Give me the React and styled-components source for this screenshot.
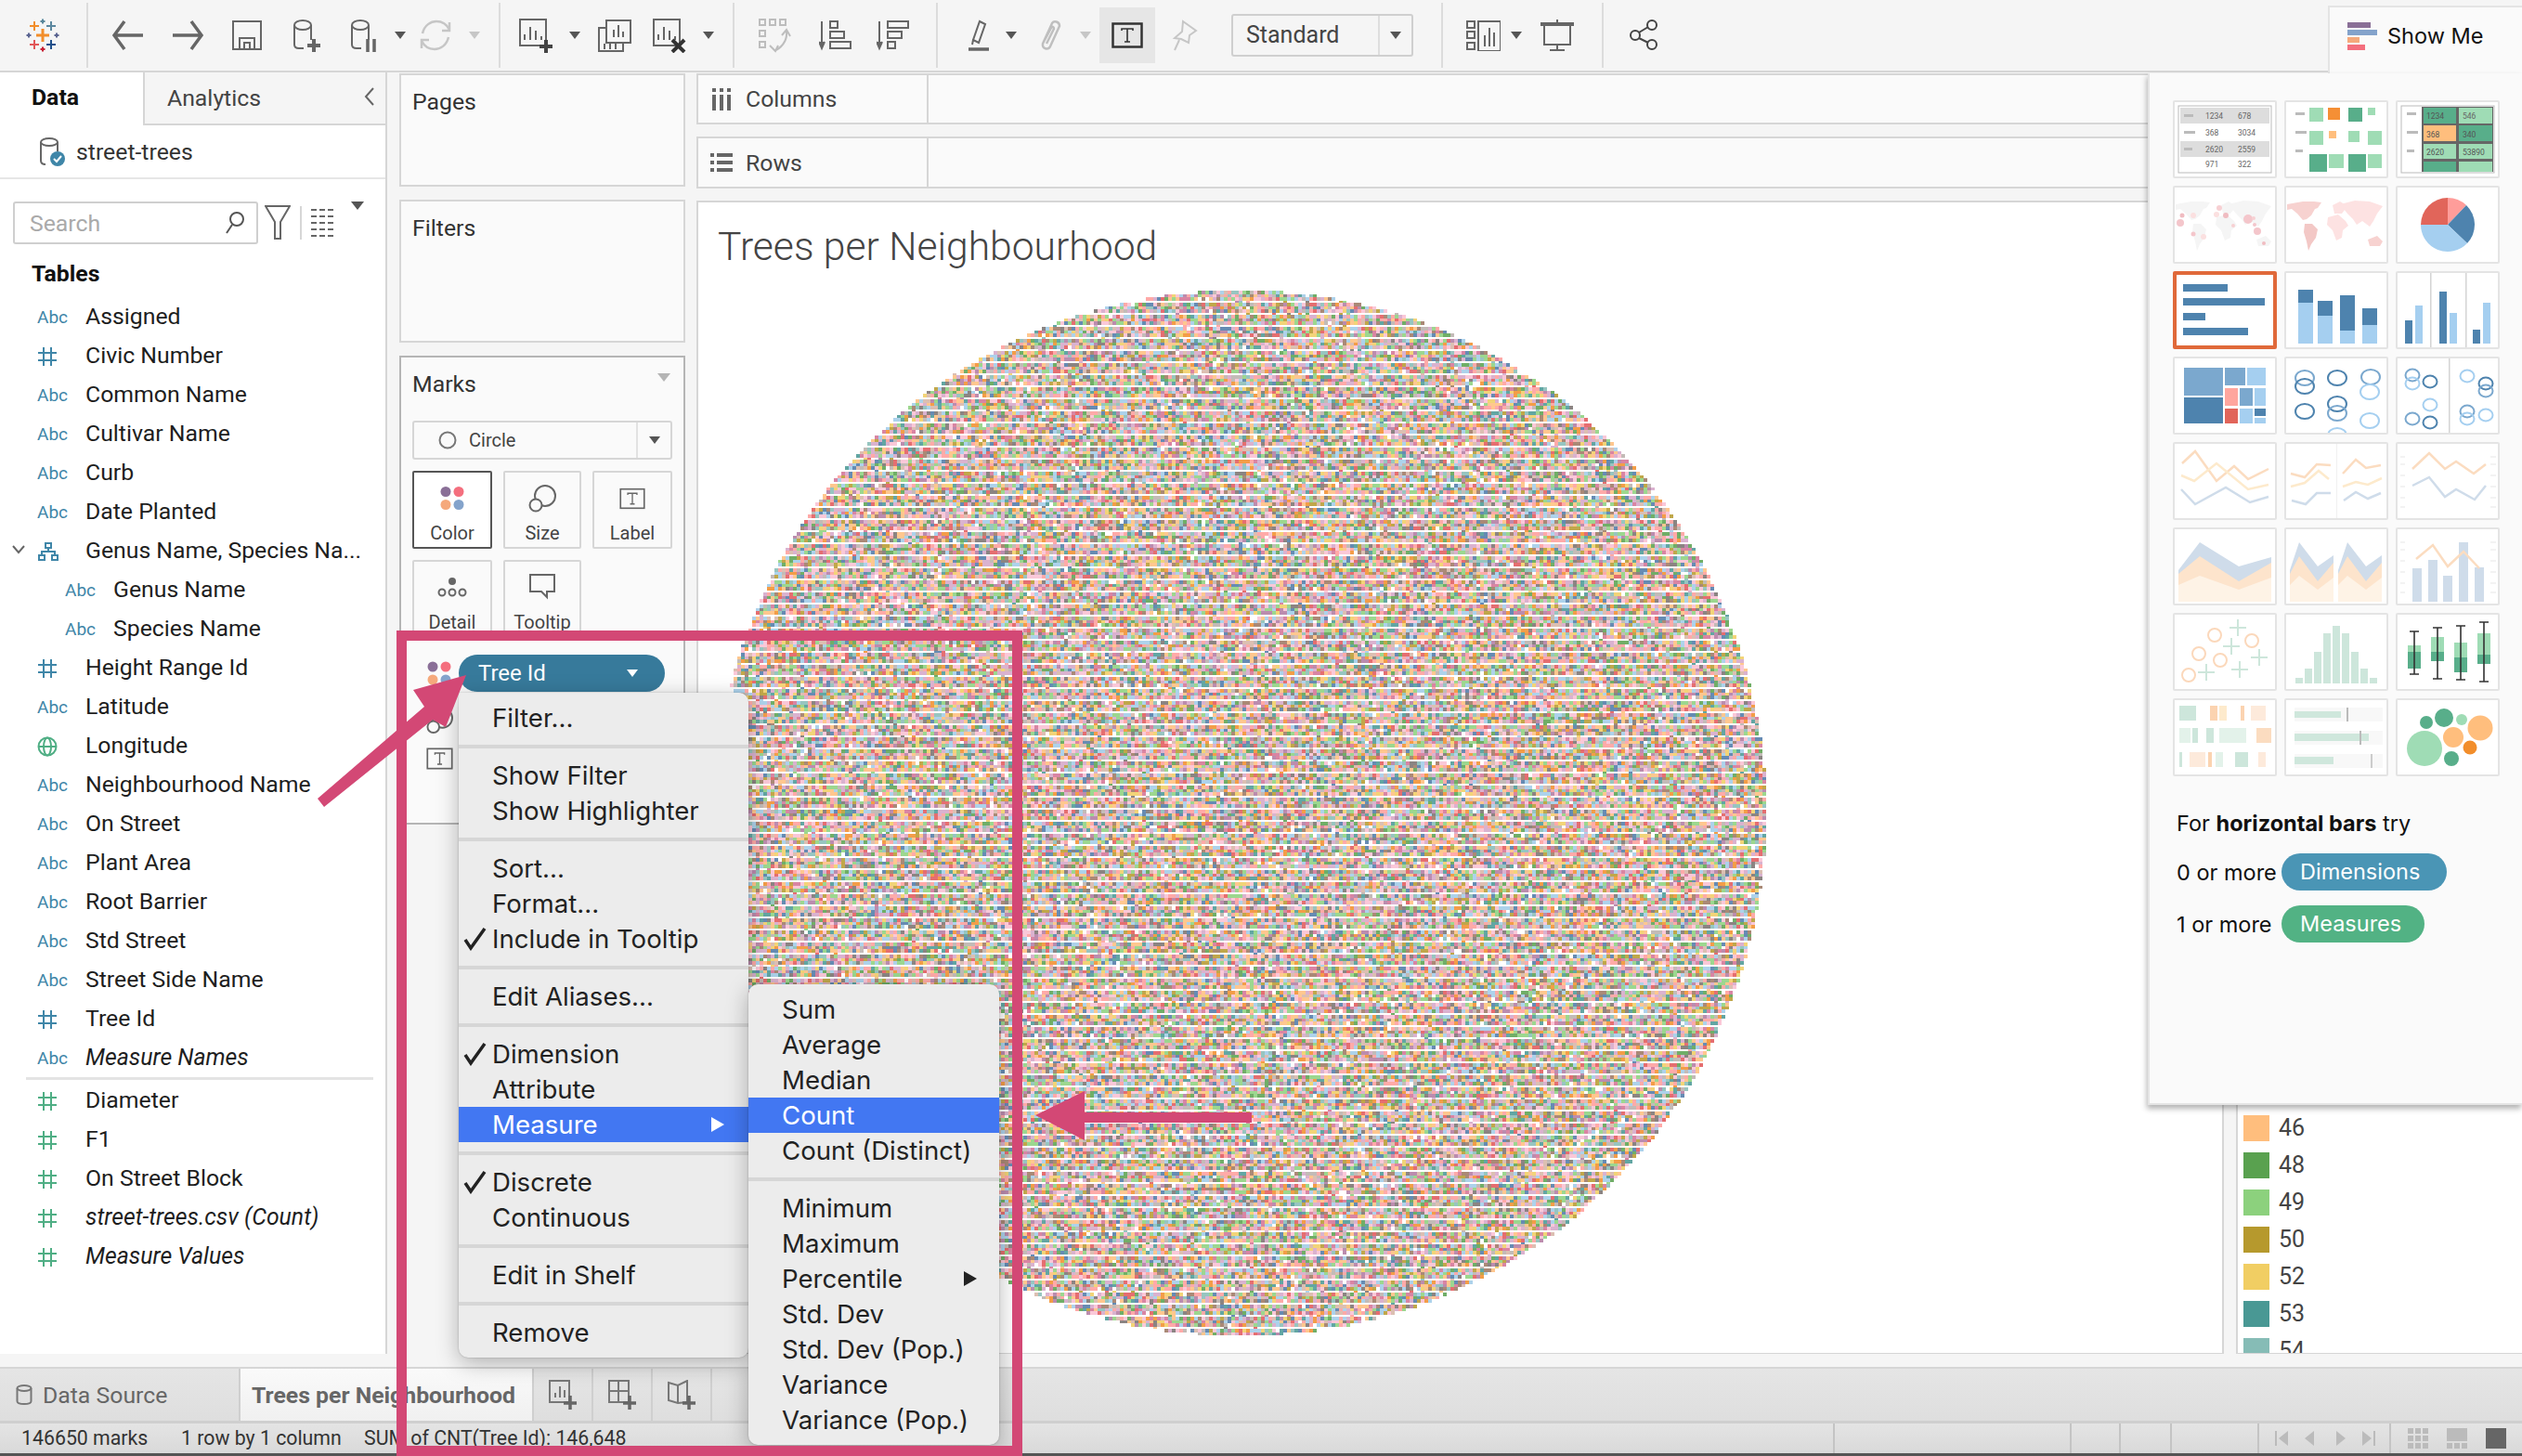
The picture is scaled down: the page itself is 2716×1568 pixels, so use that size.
import React, { useMemo } from 'react';
import styled, { createGlobalStyle } from 'styled-components';

const GlobalStyle = createGlobalStyle`
  html, body { margin: 0; padding: 0; background: #f5f5f5; }
  * { box-sizing: border-box; }
`;

const Page = styled.div`
  position: relative;
  width: 2716px;
  height: 1568px;
  overflow: hidden;
  display: flex;
  flex-direction: column;
  background: #f5f5f5;
  color: #222;
  font-family: Roboto, sans-serif;
  font-size: 24.8px;
`;

/* ---------- toolbar ---------- */
const Toolbar = styled.div`
  height: 78px;
  flex: none;
  display: flex;
  align-items: center;
  background: #f5f5f5;
  border-bottom: 2px solid #d6d6d6;
`;
const ToolGroup = styled.div`
  width: ${(p) => p.$w}px;
  height: 76px;
  flex: none;
  padding-left: ${(p) => p.$pl || 0}px;
  display: flex;
  align-items: center;
`;
const ToolDivider = styled.div`
  width: 2px;
  height: 70px;
  flex: none;
  background: #dcdcdc;
`;
const Slot = styled.div`
  width: ${(p) => p.$w}px;
  height: 60px;
  flex: none;
  display: flex;
  align-items: center;
  justify-content: center;
  background: ${(p) => (p.$on ? '#e6e6e6' : 'transparent')};
`;
const Caret = styled.span`
  width: 0;
  height: 0;
  border-left: ${(p) => p.$s || 6}px solid transparent;
  border-right: ${(p) => p.$s || 6}px solid transparent;
  border-top: ${(p) => (p.$s || 6) + 2}px solid ${(p) => p.$c || '#555'};
`;
const StandardSelect = styled.div`
  width: 196px;
  height: 46px;
  flex: none;
  display: flex;
  align-items: center;
  border: 2px solid #cfcfcf;
  border-radius: 3px;
  color: #444;
  font-size: 25px;
  > span:first-child { width: 158px; padding-left: 14px; border-right: 2px solid #dedede; line-height: 42px; }
  > span:last-child { flex: 1; display: flex; justify-content: center; }
`;

/* ---------- workspace ---------- */
const Workspace = styled.div`
  flex: 1;
  min-height: 0;
  display: flex;
`;
const DataPane = styled.div`
  width: 417px;
  flex: none;
  background: #fff;
  border-right: 2px solid #d6d6d6;
  display: flex;
  flex-direction: column;
`;
const PaneTabs = styled.div`
  height: 57px;
  flex: none;
  display: flex;
`;
const PaneTab = styled.div`
  width: ${(p) => (p.$active ? 154 : 261)}px;
  padding-left: ${(p) => (p.$active ? 34 : 24)}px;
  padding-top: ${(p) => (p.$active ? 12 : 13)}px;
  display: flex;
  justify-content: space-between;
  font-weight: ${(p) => (p.$active ? 700 : 400)};
  color: ${(p) => (p.$active ? '#111' : '#444')};
  background: ${(p) => (p.$active ? '#fff' : '#f5f5f5')};
  border-left: ${(p) => (p.$active ? 'none' : '2px solid #d6d6d6')};
  border-bottom: ${(p) => (p.$active ? 'none' : '2px solid #d6d6d6')};
  > svg { margin: 2px 10px 0 0; }
`;
const SourceRow = styled.div`
  height: 58px;
  flex: none;
  display: flex;
  align-items: center;
  gap: 12px;
  padding-left: 42px;
  border-bottom: 2px solid #e6e6e6;
  color: #333;
`;
const SearchRow = styled.div`
  height: 92px;
  flex: none;
  display: flex;
  align-items: center;
  padding: 0 0 0 14px;
  margin-top: 1px;
`;
const SearchBox = styled.div`
  width: 264px;
  height: 46px;
  flex: none;
  display: flex;
  align-items: center;
  justify-content: space-between;
  padding: 0 12px 0 16px;
  border: 2px solid #cfcfcf;
  border-radius: 3px;
  color: #aaa;
`;
const FilterSep = styled.div`
  width: 2px;
  height: 36px;
  margin: 0 10px;
  background: #d6d6d6;
`;
const TablesHeading = styled.div`
  height: 26px;
  line-height: 26px;
  padding-left: 34px;
  margin: -4px 0 11px;
  font-weight: 700;
  color: #111;
`;
const FieldRow = styled.div`
  height: 42px;
  flex: none;
  display: flex;
  align-items: center;
  padding-left: ${(p) => (p.$child ? 70 : 40)}px;
  color: #1e1e1e;
  font-style: ${(p) => (p.$italic ? 'italic' : 'normal')};
  white-space: nowrap;
  position: relative;
`;
const TypeBadge = styled.span`
  width: 52px;
  flex: none;
  display: flex;
  align-items: center;
  font-style: normal;
  font-size: 19px;
  padding-top: 3px;
  color: #3f86a8;
`;
const ExpandCaret = styled.svg`
  position: absolute;
  left: 13px;
  top: 15px;
`;
const FieldRule = styled.div`
  height: 3px;
  margin: 1px 13px 0 28px;
  background: #e4e4e4;
`;

const ShelvesColumn = styled.div`
  width: 308px;
  flex: none;
  margin: 1px 12px 0 13px;
  display: flex;
  flex-direction: column;
  gap: 14px;
`;
const Card = styled.div`
  height: ${(p) => p.$h}px;
  flex: none;
  background: #fafafa;
  border: 2px solid ${(p) => p.$line || '#d6d6d6'};
  padding: 14px 12px;
  color: #333;
`;
const MarksHead = styled.div`
  height: 54px;
  display: flex;
  justify-content: space-between;
  > span:last-child { margin: 12px 2px 0 0; }
`;
const MarkSelect = styled.div`
  height: 42px;
  display: flex;
  align-items: center;
  border: 2px solid #d6d6d6;
  border-radius: 3px;
  color: #444;
  font-size: 20px;
  > svg { margin: 0 13px 0 26px; }
  > div { margin-left: auto; width: 37px; height: 38px; border-left: 2px solid #e2e2e2; display: flex; align-items: center; justify-content: center; }
`;
const MarkGrid = styled.div`
  display: grid;
  grid-template-columns: 86px 84px 86px;
  grid-auto-rows: 84px;
  gap: 12px;
  margin-top: 12px;
`;
const MarkCard = styled.div`
  display: flex;
  flex-direction: column;
  align-items: center;
  padding-top: 12px;
  border: 2px solid ${(p) => (p.$active ? '#555' : '#d6d6d6')};
  background: ${(p) => (p.$active ? '#fff' : 'transparent')};
  border-radius: 2px;
  color: #444;
  font-size: 20px;
  > svg { height: 32px; margin-bottom: 9px; }
`;
const PillRow = styled.div`
  height: 40px;
  display: flex;
  align-items: center;
  padding-left: 15px;
  margin-top: ${(p) => p.$mt || 0}px;
  > svg { width: 29px; flex: none; }
`;
const FieldPill = styled.div`
  width: 222px;
  height: 40px;
  margin-left: 6px;
  padding: 0 29px 0 21px;
  display: flex;
  align-items: center;
  justify-content: space-between;
  border-radius: 20px;
  background: #377a9b;
  color: #fff;
  font-size: 24px;
`;

const MainColumn = styled.div`
  flex: 1;
  min-width: 0;
  margin-top: 1px;
  display: flex;
  flex-direction: column;
`;
const AxisShelf = styled.div`
  height: ${(p) => p.$h}px;
  flex: none;
  margin-bottom: 13px;
  display: flex;
  background: #fafafa;
  border: 2px solid #d6d6d6;
  border-right: none;
  > div {
    width: 248px;
    display: flex;
    align-items: center;
    gap: 14px;
    padding-left: 13px;
    border-right: 2px solid #d6d6d6;
    color: #444;
  }
`;
const ViewRow = styled.div`
  height: 1243px;
  flex: none;
  display: flex;
  gap: 13px;
`;
const ViewPane = styled.div`
  width: 1645px;
  flex: none;
  overflow: hidden;
  background: #fff;
  border: 2px solid #d6d6d6;
  padding: 23px 0 0 24px;
`;
const ViewTitle = styled.div`
  height: 72px;
  margin-left: -3px;
  font-size: 42.6px;
  font-weight: 300;
  line-height: 48px;
  color: #444;
`;
const ScatterSvg = styled.svg`
  display: block;
  margin-left: -6px;
`;
const LegendPane = styled.div`
  flex: 1;
  background: #fff;
  border: 2px solid #d6d6d6;
  border-right: none;
  overflow: hidden;
  padding: 983px 0 0 6px;
  display: flex;
  flex-direction: column;
  gap: 12px;
`;
const LegendItem = styled.div`
  height: 28px;
  flex: none;
  display: flex;
  align-items: center;
  gap: 10px;
  color: #444;
  font-size: 25px;
  line-height: 28px;
  > i { width: 28px; height: 28px; background: ${(p) => p.$c}; }
`;

/* ---------- bottom bars ---------- */
const SheetStrip = styled.div`
  height: 14px;
  flex: none;
  background: #f5f5f5;
`;
const TabBar = styled.div`
  height: 61px;
  flex: none;
  display: flex;
  border-top: 2px solid #d6d6d6;
  border-bottom: 3px solid #cfcfcf;
  background: linear-gradient(#e5e5e5, #dedede);
  color: #666;
`;
const SheetTab = styled.div`
  width: ${(p) => p.$w}px;
  flex: none;
  display: flex;
  align-items: center;
  gap: 11px;
  padding-left: ${(p) => p.$pl || 0}px;
  justify-content: ${(p) => (p.$center ? 'center' : 'flex-start')};
  border-right: 2px solid #cfcfcf;
  font-weight: ${(p) => (p.$active ? 700 : 400)};
  background: ${(p) => (p.$active ? 'linear-gradient(#fafafa, #f0f0f0)' : 'transparent')};
`;
const StatusBar = styled.div`
  height: 32px;
  flex: none;
  display: flex;
  background: linear-gradient(#e4e4e4, #d9d9d9);
  font-size: 21.3px;
  color: #333;
  white-space: nowrap;
`;
const StatusCell = styled.div`
  width: ${(p) => p.$w}px;
  flex: none;
  padding-left: ${(p) => p.$pl || 0}px;
  display: flex;
  align-items: center;
  gap: ${(p) => p.$gap || 0}px;
  border-right: ${(p) => (p.$line ? '2px solid #c4c4c4' : 'none')};
  line-height: 32px;
`;
const BottomEdge = styled.div`
  height: 3px;
  flex: none;
  background: #555;
`;

/* ---------- context menus ---------- */
const MenuLayer = styled.div`
  position: absolute;
  left: 494px;
  top: 746px;
  width: 312px;
  font-family: Inter, sans-serif;
  font-size: 27.6px;
  color: #222;
`;
const Menu = styled.div`
  width: ${(p) => p.$w}px;
  padding: 8px 0;
  background: #ececec;
  border-radius: ${(p) => (p.$sub ? '10px' : '0 10px 10px 10px')};
  box-shadow: 0 6px 24px rgba(0, 0, 0, 0.28), 0 0 2px rgba(0, 0, 0, 0.25);
  ${(p) => p.$sub && 'position: absolute; left: 312px; top: 314px;'}
`;
const MenuItem = styled.div`
  height: 38px;
  display: flex;
  align-items: center;
  justify-content: space-between;
  position: relative;
  padding: 0 ${(p) => (p.$sub ? 24 : 26)}px 0 36px;
  background: ${(p) => (p.$hl ? '#4277f2' : 'transparent')};
  color: ${(p) => (p.$hl ? '#fff' : '#222')};
  white-space: nowrap;
`;
const MenuCheck = styled.svg`
  position: absolute;
  left: 4px;
  top: 6px;
`;
const MenuArrow = styled.span`
  border-top: 8px solid transparent;
  border-bottom: 8px solid transparent;
  border-left: 14px solid ${(p) => (p.$hl ? '#fff' : '#222')};
`;
const MenuSep = styled.div`
  height: 24px;
  display: flex;
  align-items: center;
  &::before { content: ''; flex: 1; height: 4px; background: #d6d6d6; }
`;

/* ---------- show me ---------- */
const ShowMeTab = styled.div`
  position: absolute;
  left: 2507px;
  top: 6px;
  width: 209px;
  height: 76px;
  display: flex;
  align-items: center;
  gap: 11px;
  padding: 0 0 13px 19px;
  background: #fafafa;
  border-left: 2px solid #e4e4e4;
  border-top: 2px solid #e4e4e4;
  font-family: Inter, sans-serif;
  font-size: 23.5px;
  color: #111;
`;
const ShowMePanel = styled.div`
  position: absolute;
  left: 2313px;
  top: 79px;
  width: 403px;
  height: 1111px;
  padding: 29px 0 0 25px;
  background: #fafafa;
  border-left: 2px solid #e4e4e4;
  border-bottom: 2px solid #e4e4e4;
  box-shadow: -1px 4px 6px rgba(0, 0, 0, 0.3);
  font-family: Inter, sans-serif;
  font-size: 23.5px;
  color: #111;
`;
const ThumbGrid = styled.div`
  display: grid;
  grid-template-columns: repeat(3, 112px);
  grid-auto-rows: 84px;
  gap: 8px;
`;
const Thumb = styled.div`
  background: #fff;
  border: ${(p) => (p.$sel ? '4px solid #e0693a' : '2px solid #e4e4e4')};
  border-radius: 2px;
  overflow: hidden;
  > svg { display: block; width: 112px; height: 84px; margin: ${(p) => (p.$sel ? '-4px' : '-2px')}; }
`;
const HintBlock = styled.div`
  margin: 36px 0 0 4px;
  display: flex;
  flex-direction: column;
  gap: 16px;
  > div:first-child { height: 30px; line-height: 30px; margin-bottom: 1px; }
`;
const HintRow = styled.div`
  height: 40px;
  display: flex;
  align-items: center;
`;
const HintLabel = styled.span`
  width: 113px;
  flex: none;
`;
const HintPill = styled.span`
  height: 40px;
  width: ${(p) => p.$w}px;
  padding-left: 20px;
  line-height: 39px;
  border-radius: 20px;
  background: ${(p) => p.$c};
  color: #fff;
`;

/* ---------- annotation ---------- */
const AnnotationBox = styled.div`
  position: absolute;
  left: 427px;
  top: 679px;
  width: 674px;
  height: 889px;
  border: 11px solid #d34875;
  pointer-events: none;
`;
const ArrowLayer = styled.svg`
  position: absolute;
  left: 0;
  top: 0;
  pointer-events: none;
`;

/* ---------- icons ---------- */
const G = '#666';
const Stroke = ({ w, h, children, sw = 2, c = G }) => (
  <svg width={w} height={h} viewBox={`0 0 ${w} ${h}`} fill="none" stroke={c} strokeWidth={sw}>{children}</svg>
);

const TableauLogo = () => {
  const cross = (x, y, s, c, k) => (
    <path key={k} d={`M${x - s} ${y}H${x + s}M${x} ${y - s}V${y + s}`} stroke={c} strokeWidth={s > 5 ? 3 : 2} />
  );
  return (
    <svg width="36" height="36" viewBox="0 0 36 36" fill="none">
      {cross(18, 18, 7, '#f28e2b', 'a')}
      {cross(9, 8, 5, '#f28e2b', 'b')}
      {cross(27, 8, 5, '#5b879f', 'c')}
      {cross(9, 28, 5, '#e15759', 'd')}
      {cross(27, 28, 5, '#1f4f8a', 'e')}
      {cross(18, 3, 2.5, '#59879b', 'f')}
      {cross(18, 33, 2.5, '#c72035', 'g')}
      {cross(3, 18, 2.5, '#5b6591', 'h')}
      {cross(33, 18, 2.5, '#5b6591', 'i')}
    </svg>
  );
};
const ArrowIcon = ({ dir }) => (
  <Stroke w={36} h={34} sw={3.5}>
    {dir === 'left' ? <path d="M34 17H3M14 2L3 17l11 15" /> : <path d="M2 17h31M22 2l11 15-11 15" />}
  </Stroke>
);
const SaveIcon = () => (
  <Stroke w={34} h={34}><path d="M2 2h30v30H2zM9 32V20h16v12M14 32v-7h6v7" /></Stroke>
);
const DbIcon = ({ badge, c = G }) => (
  <svg width="32" height="36" viewBox="0 0 32 36" fill="none" stroke={c} strokeWidth="2">
    <ellipse cx="12" cy="7" rx="9" ry="5" />
    <path d="M3 7v21c0 3 2 4 5 4h5M21 7v16" />
    {badge === 'plus' && <path d="M24 22v14M17 29h14" strokeWidth="4" />}
    {badge === 'pause' && <path d="M20 22v14M27 22v14" strokeWidth="3.5" />}
  </svg>
);
const RefreshIcon = () => (
  <Stroke w={36} h={34} c="#c6c6c6" sw={2.5}>
    <path d="M4 15C6 6 13 2 19 2c6 0 11 3 14 9M32 19c-2 9-9 13-15 13-6 0-11-3-14-9" />
    <path d="M33 3v9h-8M3 31v-9h8" />
  </Stroke>
);
const SheetIcon = ({ badge }) => (
  <svg width="40" height="38" viewBox="0 0 40 38" fill="none" stroke={G} strokeWidth="2">
    <path d="M2 2h28v28H2z" />
    <path d="M9 24v-6M15 24V10M21 24V14M27 24v-4" transform="translate(-2 0)" />
    {badge === 'plus' && <path d="M30 24v14M23 31h14" strokeWidth="4" stroke="#444" />}
    {badge === 'x' && <path d="M22 24l13 13M35 24L22 37" strokeWidth="4" stroke="#333" />}
  </svg>
);
const DupIcon = () => (
  <Stroke w={38} h={36}>
    <path d="M10 2h26v24H10zM18 20v-8M23 20V7M28 20v-6" />
    <path d="M10 10H2v25h26v-9M8 33v-6M14 33v-6M20 33v-6" />
  </Stroke>
);
const SwapIcon = () => (
  <Stroke w={36} h={38} c="#bdbdbd">
    <path d="M2 2h6v6H2zM13 2h6v6h-6zM24 2h6v6h-6zM2 14h6v6H2zM2 26h6v6H2z" />
    <path d="M31 14c1 9-3 16-11 21M26 19l5-6 4 7M13 30l6 6 3-6" />
  </Stroke>
);
const SortIcon = ({ desc }) => (
  <Stroke w={36} h={34}>
    <path d="M3 2v28" />
    <path d="M0 24l3 7 3-7" fill={G} />
    {(desc ? [[12, 22], [12, 15], [12, 8]] : [[12, 8], [12, 15], [12, 22]]).map(([x, w], i) => (
      <rect key={i} x={x} y={2 + i * 11} width={w} height={7} />
    ))}
  </Stroke>
);
const PenIcon = () => (
  <svg width="24" height="34" viewBox="0 0 24 34" fill="none" stroke={G} strokeWidth="2">
    <path d="M13 2l6 3-7 20-6-3zM6 22l-1 5" />
    <path d="M1 32h22" strokeWidth="3.5" />
  </svg>
);
const ClipIcon = () => (
  <Stroke w={26} h={34} c="#bfbfbf" sw={2.5}>
    <path d="M4 26L14 4c2-3 8-2 8 3L12 29c-2 4-9 3-8-3l9-17c1-2 3-1 3 1L8 26" />
  </Stroke>
);
const TextIcon = ({ w = 34, h = 28, sw = 2.5, c = '#333' }) => (
  <svg width={w} height={h} viewBox="0 0 34 28" fill="none" stroke={c} strokeWidth={sw}>
    <rect x="1.5" y="1.5" width="31" height="25" />
    <path d="M11 9V7h12v2M17 7v14M14 21h6" strokeWidth="1.6" />
  </svg>
);
const PinIcon = () => (
  <Stroke w={28} h={34} c="#c6c6c6">
    <path d="M12 2l14 10-7 5-1 8-8-4-7-1 8-7zM8 22L3 33" />
  </Stroke>
);
const FitIcon = () => (
  <Stroke w={38} h={34}>
    <path d="M2 2h8v7H2zM2 13h8v7H2zM2 25h8v7H2zM14 2h24v32H14zM21 29V17M26 29V9M31 29V14" />
  </Stroke>
);
const PresentIcon = () => (
  <svg width="36" height="34" viewBox="0 0 36 34" fill="none" stroke={G} strokeWidth="2">
    <path d="M0 5h36" strokeWidth="4" />
    <path d="M18 0v3M4 7v20h28V7M18 27v6M10 33h16" />
  </svg>
);
const ShareIcon = () => (
  <Stroke w={30} h={34} c="#444">
    <circle cx="6" cy="17" r="5" /><circle cx="24" cy="6" r="5" /><circle cx="24" cy="27" r="5" />
    <path d="M10 14l10-6M10 20l10 5" />
  </Stroke>
);
const CylinderBadge = () => (
  <svg width="28" height="32" viewBox="0 0 28 32">
    <g fill="none" stroke="#666" strokeWidth="2">
      <ellipse cx="11" cy="6" rx="9" ry="4" />
      <path d="M2 6v20c0 3 2 4 5 4M20 6v10" />
    </g>
    <circle cx="20" cy="24" r="8" fill="#3f86a8" />
    <path d="M16 24l3 3 5-6" fill="none" stroke="#fff" strokeWidth="2" />
  </svg>
);
const HashIcon = ({ c }) => (
  <svg width="22" height="22" viewBox="0 0 22 22" fill="none" stroke={c} strokeWidth="2">
    <path d="M7 1v20M15 1v20M1 7h20M1 15h20" />
  </svg>
);
const GlobeIcon = () => (
  <svg width="22" height="22" viewBox="0 0 22 22" fill="none" stroke="#4fae84" strokeWidth="2">
    <circle cx="11" cy="11" r="9.5" /><ellipse cx="11" cy="11" rx="4" ry="9.5" /><path d="M1.5 11h19" />
  </svg>
);
const TreeIcon = () => (
  <svg width="24" height="22" viewBox="0 0 24 22" fill="none" stroke="#3f86a8" strokeWidth="2">
    <path d="M9 2h6v5H9zM2 15h6v5H2zM16 15h6v5h-6zM12 7v4M5 15v-4h14v4" />
  </svg>
);
const DotsIcon = () => (
  <svg width="29" height="29" viewBox="0 0 29 29">
    <circle cx="7" cy="7" r="5.5" fill="#8a6f97" /><circle cx="21" cy="7" r="5.5" fill="#f46f7e" />
    <circle cx="7" cy="21" r="5.5" fill="#f5a97c" /><circle cx="21" cy="21" r="5.5" fill="#84a3cb" />
  </svg>
);
const SizeIcon = () => (
  <svg width="30" height="30" viewBox="0 0 30 30" fill="none" stroke="#666" strokeWidth="2">
    <circle cx="18" cy="12" r="11" /><circle cx="8" cy="22" r="6.5" fill="#fafafa" />
  </svg>
);
const DetailIcon = () => (
  <svg width="32" height="32" viewBox="0 0 32 32" fill="none" stroke="#666" strokeWidth="2">
    <circle cx="16" cy="9" r="4" fill="#666" stroke="none" />
    <circle cx="5" cy="21" r="3.5" /><circle cx="16" cy="21" r="3.5" /><circle cx="27" cy="21" r="3.5" />
  </svg>
);
const TooltipIcon = () => (
  <svg width="30" height="32" viewBox="0 0 30 32" fill="none" stroke="#666" strokeWidth="2">
    <path d="M2 2h26v18h-8v6l-6-6H2z" />
  </svg>
);
const CheckMark = () => (
  <MenuCheck width="28" height="26" viewBox="0 0 28 26" fill="none" stroke="#222" strokeWidth="3.5">
    <path d="M3 14l6 9L24 2" />
  </MenuCheck>
);

/* ---------- scatter plot ---------- */
const PALETTE = [
  '#4e79a7', '#a0cbe8', '#f28e2b', '#ffbe7d', '#59a14f', '#8cd17d', '#b6992d', '#f1ce63', '#499894', '#86bcb6',
  '#e15759', '#ff9d9a', '#79706e', '#bab0ac', '#d37295', '#fabfd2', '#b07aa1', '#d4a6c8', '#9d7660', '#d7b5a6',
  '#fabfd2', '#ff9d9a', '#d4a6c8', '#ffbe7d', '#a0cbe8', '#8cd17d',
];
const PLOT_W = 1132;
const PLOT_H = 1126;
const useScatterPaths = () => useMemo(() => {
  let seed = 1337;
  const rand = () => {
    seed = (seed * 1664525 + 1013904223) >>> 0;
    return ((seed >>> 8) % 100000) / 100000;
  };
  const parts = PALETTE.map(() => []);
  const rx = PLOT_W / 2;
  const ry = PLOT_H / 2;
  // three rows of marks, then a nearly empty gap row
  const rows = [[0, 4, 0.98], [4, 3, 0.98], [7, 4, 0.98], [11, 2, 0.1]];
  for (let band = 0; band * 13 < PLOT_H; band += 1) {
    rows.forEach(([off, h, fillRate]) => {
      const y = band * 13 + off;
      for (let x = 0; x < PLOT_W; x += 4) {
        const dx = (x + 2 - rx) / rx;
        const dy = (y + 2 - ry) / ry;
        if (dx * dx + dy * dy < 1 && rand() < fillRate) {
          parts[Math.floor(rand() * PALETTE.length)].push(`M${x} ${y}h4v${h}h-4z`);
        }
      }
    });
  }
  return parts.map((p) => p.join(''));
}, []);

const ScatterPlot = () => {
  const paths = useScatterPaths();
  return (
    <ScatterSvg width={PLOT_W} height={PLOT_H} viewBox={`0 0 ${PLOT_W} ${PLOT_H}`} shapeRendering="crispEdges" opacity="0.86">
      {paths.map((d, i) => <path key={i} d={d} fill={PALETTE[i]} />)}
    </ScatterSvg>
  );
};

/* ---------- show me thumbs ---------- */
const DK = '#4e83ae';
const MD = '#7ba8ce';
const LT = '#a5cff0';
const GD = '#58ae8a';
const GL = '#9fdcb5';
const PG = '#cde6db';
const PO = '#fbdcc0';
const PY = '#fdeacc';
const PB = '#cfdcea';

const Bars = ({ list }) => list.map(([x, y, w, h, c], i) => <rect key={i} x={x} y={y} width={w} height={h} fill={c} />);
const Lines = ({ list, sw = 2.5 }) => list.map(([c, d], i) => <polyline key={i} points={d} fill="none" stroke={c} strokeWidth={sw} />);
const Rings = ({ list, rx, ry }) => list.map(([x, y, c], i) => (
  <ellipse key={i} cx={x} cy={y} rx={rx} ry={ry} fill="none" stroke={c} strokeWidth="2" />
));
const Ticks = () => [16, 24, 36, 48, 60, 70].map((y) => (
  <path key={y} d={`M5 ${y}h5M102 ${y}h6`} stroke="#f0f0f0" strokeWidth="1.5" />
));
const ThumbText = ({ x, y, children, c = '#666' }) => (
  <text x={x} y={y} fontFamily="Roboto, sans-serif" fontSize="8.5" fill={c}>{children}</text>
);
const WORLD = [
  'M3 20L20 17 32 17 40 18 36 24 33 25 29 32 24 36 20 37 14 30 8 25 3 26z',
  'M22 41L30 41 36 47 34 56 29 63 26 70 24 60 21 50z',
  'M52 21L60 17 68 22 62 30 54 30z',
  'M47 34L58 31 66 38 69 43 63 48 62 56 56 59 52 48 46 42z',
  'M60 20L76 16 92 17 106 22 100 30 96 38 92 44 84 38 78 42 74 36 68 30z',
  'M90 58L100 54 106 60 103 65 92 65z',
];
const WorldShape = ({ fills }) => WORLD.map((d, i) => <path key={i} d={d} fill={fills[i % fills.length]} />);

const THUMBS = [
  <>
    <rect x="6" y="6" width="100" height="72" fill="none" stroke="#bbb" strokeWidth="1" />
    <Bars list={[[8, 8, 96, 17, '#ddd'], [8, 44, 96, 17, '#ddd'], [12, 15, 10, 3, '#bbb'], [12, 33, 12, 3, '#bbb'], [12, 51, 9, 3, '#bbb']]} />
    <ThumbText x="35" y="20">1234</ThumbText><ThumbText x="70" y="20">678</ThumbText>
    <ThumbText x="35" y="38">368</ThumbText><ThumbText x="70" y="38">3034</ThumbText>
    <ThumbText x="35" y="56">2620</ThumbText><ThumbText x="70" y="56">2559</ThumbText>
    <ThumbText x="35" y="72">971</ThumbText><ThumbText x="70" y="72">322</ThumbText>
  </>,
  <Bars list={[
    [12, 13, 10, 3, '#bbb'], [12, 33, 12, 3, '#bbb'], [12, 53, 8, 3, '#bbb'],
    [27, 8, 15, 15, GL], [47, 8, 13, 13, '#f58f35'], [69, 8, 15, 15, GD], [90, 8, 8, 8, GL],
    [27, 33, 15, 15, GL], [48, 33, 8, 8, '#ffbe7d'], [69, 33, 12, 12, GL], [90, 33, 15, 15, GL],
    [27, 58, 19, 19, GD], [48, 58, 16, 15, GL], [69, 58, 19, 19, GD], [90, 58, 15, 15, GL],
  ]} />,
  <>
    <rect x="6" y="6" width="100" height="72" fill="none" stroke="#bbb" strokeWidth="1" />
    <Bars list={[
      [12, 13, 10, 3, '#bbb'], [12, 33, 12, 3, '#bbb'], [12, 53, 8, 3, '#bbb'],
      [28, 7, 77, 70, '#666'],
      [30, 8, 35, 17, GD], [68, 8, 36, 17, GL], [30, 27, 35, 17, '#ffbe7d'], [68, 27, 36, 17, GD],
      [30, 47, 35, 16, GL], [68, 47, 36, 16, GL], [30, 66, 35, 11, GD], [68, 66, 36, 11, GL],
    ]} />
    <ThumbText x="33" y="20" c="#555">1234</ThumbText><ThumbText x="72" y="20" c="#666">546</ThumbText>
    <ThumbText x="33" y="40" c="#555">368</ThumbText><ThumbText x="72" y="40" c="#555">340</ThumbText>
    <ThumbText x="33" y="59" c="#555">2620</ThumbText><ThumbText x="72" y="59" c="#555">53890</ThumbText>
  </>,
  <>
    <WorldShape fills={['#f5f5f5']} />
    {[[8, 40, 4, '#f4c6cb'], [10, 32, 2.5, '#f0bcc1'], [22, 32, 3, '#fbe0e0'], [50, 24, 3, '#f7d0d3'], [47, 31, 3, '#fbe0e0'], [57, 32, 3, '#f0bcc1'], [65, 43, 2, '#f7d0d3'], [81, 36, 5, '#f4c6cb'], [87, 35, 2, '#f7d0d3'], [88, 42, 2, '#f4c6cb'], [91, 49, 4, '#f4c6cb'], [22, 52, 2.5, '#f4c6cb'], [33, 55, 3, '#fbe0e0'], [98, 62, 2, '#f0bcc1']].map(([x, y, r, c], i) => (
      <circle key={i} cx={x} cy={y} r={r} fill={c} />
    ))}
  </>,
  <WorldShape fills={['#f7d2d0', '#f3c8c6', '#fde2e2', '#fde2e2', '#fde2e2', '#f7d2d0']} />,
  <>
    <path d="M56 42V13A29 29 0 0 1 76 21z" fill="#ff9d9a" />
    <path d="M56 42L76 21A29 29 0 0 1 77 62z" fill={DK} />
    <path d="M56 42L77 62A29 29 0 0 1 27 42z" fill={LT} />
    <path d="M56 42H27A29 29 0 0 1 56 13z" fill="#e1655a" />
  </>,
  <Bars list={[[11, 14, 48, 8, DK], [11, 29, 88, 8, DK], [11, 45, 24, 8, DK], [11, 61, 70, 8, DK]]} />,
  <Bars list={[
    [15, 20, 16, 14, DK], [15, 34, 16, 44, LT], [36, 32, 16, 16, DK], [36, 48, 16, 30, LT],
    [60, 26, 16, 38, DK], [60, 64, 16, 14, LT], [84, 40, 16, 18, DK], [84, 58, 16, 20, LT],
  ]} />,
  <Bars list={[
    [37, 0, 1.5, 84, '#d4d4d4'], [75, 0, 1.5, 84, '#d4d4d4'],
    [10, 53, 8, 25, DK], [21, 37, 8, 41, LT], [47, 22, 8, 56, DK], [58, 45, 8, 33, LT], [83, 63, 8, 15, DK], [94, 34, 8, 44, LT],
  ]} />,
  <Bars list={[
    [12, 12, 42, 30, MD], [12, 44, 42, 28, DK], [56, 12, 22, 19, MD], [80, 12, 20, 19, LT],
    [56, 34, 14, 19, '#ffa69e'], [72, 34, 14, 19, MD], [88, 34, 12, 19, LT],
    [56, 56, 14, 16, '#e1655a'], [72, 56, 14, 16, LT], [88, 56, 12, 8, DK], [88, 66, 12, 6, LT],
  ]} />,
  <Rings rx={10} ry={8} list={[[22, 23, MD], [22, 32, DK], [57, 23, DK], [22, 59, DK], [57, 51, DK], [57, 61, MD], [93, 22, MD], [92, 38, LT], [92, 69, LT], [57, 85, LT]]} />,
  <>
    <Bars list={[[57, 0, 1.5, 84, '#d4d4d4']]} />
    <Rings rx={7.5} ry={6.5} list={[[18, 20, MD], [18, 29, LT], [37, 27, DK], [37, 52, LT], [18, 67, MD], [37, 71, DK], [77, 21, LT], [97, 29, DK], [97, 37, MD], [77, 59, MD], [77, 67, LT], [97, 63, LT]]} />
  </>,
  <Lines list={[[PO, '10,23 24,10 47,42 66,26 81,40 103,29'], [PY, '9,36 23,42 47,23 81,51 103,46'], [PB, '9,51 24,67 57,49 83,65 103,59']]} />,
  <>
    <Bars list={[[56, 0, 1, 84, '#f0f0f0']]} />
    <Lines list={[
      [PO, '7,34 22,38 35,24 50,25'], [PY, '7,48 22,44 37,31 48,40'], [PB, '8,63 23,67 35,55 50,55'],
      [PO, '63,34 77,19 88,28 104,25'], [PY, '63,48 77,43 90,46 105,39'], [PB, '64,63 77,54 90,61 104,55'],
    ]} />
  </>,
  <>
    <Ticks />
    <Lines list={[[PO, '18,29 36,12 53,29 65,21 84,34 97,24'], [PB, '18,47 36,38 53,59 65,51 85,62 97,47']]} />
  </>,
  <>
    <polygon points="6,46 29,16 71,42 106,32 106,80 6,80" fill={PB} />
    <polygon points="6,50 29,31 71,58 106,38 106,80 6,80" fill="#fde4cc" />
    <polygon points="6,62 29,52 71,67 106,54 106,80 6,80" fill="#fef3e6" />
  </>,
  <>
    <polygon points="6,46 16,16 36,42 53,30 53,80 6,80" fill={PB} />
    <polygon points="6,50 16,31 36,58 53,38 53,80 6,80" fill="#fde4cc" />
    <polygon points="6,62 16,52 36,67 53,54 53,80 6,80" fill="#fef3e6" />
    <polygon points="58,46 68,16 88,42 105,30 105,80 58,80" fill={PB} />
    <polygon points="58,50 68,31 88,58 105,38 105,80 58,80" fill="#fde4cc" />
    <polygon points="58,62 68,52 88,67 105,54 105,80 58,80" fill="#fef3e6" />
  </>,
  <>
    <Ticks />
    <Bars list={[[18, 44, 10, 36, PB], [35, 35, 10, 45, PB], [51, 52, 10, 28, PB], [68, 16, 10, 64, PB], [85, 43, 10, 37, PB]]} />
    <Lines list={[[PO, '22,34 40,19 56,42 73,26 90,44']]} />
  </>,
  <>
    <Lines sw={2} list={[[PG, '70,7 70,25'], [PG, '61,16 79,16'], [PG, '63,27 63,45'], [PG, '54,36 72,36'], [PG, '93,39 93,57'], [PG, '84,48 102,48'], [PG, '36,55 36,73'], [PG, '27,64 45,64'], [PG, '72,52 72,70'], [PG, '63,61 81,61']]} />
    {[[45, 24], [85, 30], [28, 44], [51, 51], [17, 67]].map(([x, y]) => (
      <circle key={x} cx={x} cy={y} r="7" fill="none" stroke="#fbd8bb" strokeWidth="2" />
    ))}
  </>,
  <Bars list={[[12, 70, 8, 6, PG], [22, 60, 8, 16, PG], [32, 42, 8, 34, PG], [42, 22, 8, 54, PG], [52, 14, 8, 62, PG], [62, 22, 8, 54, PG], [72, 42, 8, 34, PG], [82, 60, 8, 16, PG], [92, 70, 8, 6, PG]]} />,
  <>
    <Bars list={[
      [13, 35, 14, 7, GL], [13, 42, 14, 18, GD], [38, 26, 14, 16, GL], [38, 42, 14, 10, GD],
      [63, 32, 14, 16, GL], [63, 48, 14, 16, GD], [88, 22, 14, 23, GL], [88, 45, 14, 10, GD],
    ]} />
    {[[20, 20, 66], [45, 16, 71], [70, 14, 72], [95, 10, 74]].map(([x, a, b]) => (
      <path key={x} d={`M${x - 5} ${a}h10M${x} ${a}V${b}M${x - 5} ${b}h10`} stroke="#333" strokeWidth="1.6" fill="none" />
    ))}
  </>,
  <Bars list={[
    [7, 8, 18, 16, PG], [40, 8, 8, 16, '#fbd3b0'], [50, 8, 8, 16, PY], [73, 8, 4, 16, '#fbd3b0'], [84, 8, 16, 16, '#fdeadb'],
    [7, 32, 12, 16, '#e3f2ea'], [21, 32, 6, 16, PG], [36, 32, 8, 16, PG], [50, 32, 29, 16, '#e3f2ea'], [90, 32, 16, 16, PO],
    [7, 58, 3, 16, PG], [18, 58, 17, 16, '#fdeadb'], [38, 58, 4, 16, '#fbd3b0'], [46, 58, 8, 16, '#e3f2ea'], [67, 58, 14, 16, PG], [92, 58, 8, 16, '#fdeadb'],
  ]} />,
  <Bars list={[
    [11, 10, 95, 15, '#f8f8f8'], [11, 14, 50, 7, '#cfe7dc'], [67, 10, 2, 15, '#bbb'],
    [11, 35, 95, 15, '#f8f8f8'], [11, 38, 80, 8, '#cfe7dc'], [81, 35, 2, 15, '#bbb'],
    [11, 60, 95, 15, '#f8f8f8'], [11, 63, 42, 8, '#cfe7dc'], [93, 60, 2, 15, '#ccc'],
  ]} />,
  <>
    {[[31, 54, 19, GL], [33, 26, 7, GD], [52, 21, 10, GD], [71, 23, 6, GL], [91, 32, 13.5, '#ffbe7d'], [62, 42, 11, '#ffbe7d'], [80, 53, 7.5, '#f28e2b'], [60, 65, 8, GD]].map(([x, y, r, c]) => (
      <circle key={x} cx={x} cy={y} r={r} fill={c} />
    ))}
  </>,
];

/* ---------- data ---------- */
const TOOLBAR_GROUPS = [
  { w: 442, pl: 11, items: [
    [64, <ArrowIcon dir="left" />], [64, <ArrowIcon dir="right" />], [64, <SaveIcon />], [64, <DbIcon badge="plus" />],
    [60, <DbIcon badge="pause" />], [18, <Caret />], [58, <RefreshIcon />], [26, <Caret $c="#c6c6c6" />],
  ] },
  { w: 250, pl: 9, items: [
    [60, <SheetIcon badge="plus" />], [22, <Caret />], [64, <DupIcon />], [56, <SheetIcon badge="x" />], [26, <Caret />],
  ] },
  { w: 217, pl: 13, items: [[60, <SwapIcon />], [72, <SortIcon />], [52, <SortIcon desc />]] },
];

const DIMENSIONS = [
  { name: 'Assigned' }, { name: 'Civic Number', hash: true }, { name: 'Common Name' }, { name: 'Cultivar Name' },
  { name: 'Curb' }, { name: 'Date Planted' }, { name: 'Genus Name, Species Na...', tree: true },
  { name: 'Genus Name', child: true }, { name: 'Species Name', child: true }, { name: 'Height Range Id', hash: true },
  { name: 'Latitude' }, { name: 'Longitude', globe: true }, { name: 'Neighbourhood Name' }, { name: 'On Street' },
  { name: 'Plant Area' }, { name: 'Root Barrier' }, { name: 'Std Street' }, { name: 'Street Side Name' },
  { name: 'Tree Id', hash: true }, { name: 'Measure Names', italic: true },
];
const MEASURES = [
  { name: 'Diameter' }, { name: 'F1' }, { name: 'On Street Block' },
  { name: 'street-trees.csv (Count)', italic: true }, { name: 'Measure Values', italic: true },
];
const MAIN_MENU = [
  ['Filter...'], 0, ['Show Filter'], ['Show Highlighter'], 0, ['Sort...'], ['Format...'], ['Include in Tooltip', 'check'], 0,
  ['Edit Aliases...'], 0, ['Dimension', 'check'], ['Attribute'], ['Measure', 'hl'], 0, ['Discrete', 'check'], ['Continuous'], 0,
  ['Edit in Shelf'], 0, ['Remove'],
];
const SUB_MENU = [
  ['Sum'], ['Average'], ['Median'], ['Count', 'hl'], ['Count (Distinct)'], 0, ['Minimum'], ['Maximum'], ['Percentile', 'arrow'],
  ['Std. Dev'], ['Std. Dev (Pop.)'], ['Variance'], ['Variance (Pop.)'],
];
const LEGEND = [
  ['46', '#ffbe7d'], ['48', '#59a14f'], ['49', '#8cd17d'], ['50', '#b6992d'], ['52', '#f1ce63'], ['53', '#499894'], ['54', '#86bcb6'],
];

const MenuList = ({ items, sub }) => items.map((it, i) => {
  if (!it) return <MenuSep key={i} />;
  const [label, flag] = it;
  const hl = flag === 'hl';
  return (
    <MenuItem key={label} $hl={hl} $sub={sub}>
      {flag === 'check' && <CheckMark />}
      {label}
      {(flag === 'arrow' || (hl && !sub)) && <MenuArrow $hl={hl} />}
    </MenuItem>
  );
});

const Field = ({ f, color }) => {
  let badge = 'Abc';
  if (f.hash || color) badge = <HashIcon c={color || '#3f86a8'} />;
  if (f.globe) badge = <GlobeIcon />;
  if (f.tree) badge = <TreeIcon />;
  return (
    <FieldRow $child={f.child} $italic={f.italic}>
      {f.tree && (
        <ExpandCaret width="14" height="12" viewBox="0 0 14 12" fill="none" stroke="#666" strokeWidth="2">
          <path d="M1 2l6 7 6-7" />
        </ExpandCaret>
      )}
      <TypeBadge>{badge}</TypeBadge>
      {f.name}
    </FieldRow>
  );
};

const App = () => (
  <Page>
    <GlobalStyle />
    <Toolbar>
      <ToolGroup $w={93} $pl={28}><TableauLogo /></ToolGroup>
      <ToolDivider />
      {TOOLBAR_GROUPS.map((g) => (
        <React.Fragment key={g.w}>
          <ToolGroup $w={g.w} $pl={g.pl}>
            {g.items.map(([w, icon], i) => <Slot key={i} $w={w}>{icon}</Slot>)}
          </ToolGroup>
          <ToolDivider />
        </React.Fragment>
      ))}
      <ToolGroup $w={542} $pl={20}>
        <Slot $w={48}><PenIcon /></Slot>
        <Slot $w={22}><Caret /></Slot>
        <Slot $w={64}><ClipIcon /></Slot>
        <Slot $w={10}><Caret $c="#c6c6c6" /></Slot>
        <Slot $w={10} />
        <Slot $w={60} $on><TextIcon /></Slot>
        <Slot $w={64}><PinIcon /></Slot>
        <Slot $w={18} />
        <StandardSelect><span>Standard</span><span><Caret /></span></StandardSelect>
      </ToolGroup>
      <ToolDivider />
      <ToolGroup $w={171} $pl={12}>
        <Slot $w={62}><FitIcon /></Slot>
        <Slot $w={10}><Caret /></Slot>
        <Slot $w={78}><PresentIcon /></Slot>
      </ToolGroup>
      <ToolDivider />
      <ToolGroup $w={100} $pl={13}><Slot $w={60}><ShareIcon /></Slot></ToolGroup>
    </Toolbar>

    <Workspace>
      <DataPane>
        <PaneTabs>
          <PaneTab $active>Data</PaneTab>
          <PaneTab>
            Analytics
            <svg width="14" height="22" viewBox="0 0 14 22" fill="none" stroke="#666" strokeWidth="2"><path d="M11 2L3 11l8 9" /></svg>
          </PaneTab>
        </PaneTabs>
        <SourceRow><CylinderBadge />street-trees</SourceRow>
        <SearchRow>
          <SearchBox>
            Search
            <svg width="22" height="26" viewBox="0 0 22 26" fill="none" stroke="#555" strokeWidth="2">
              <circle cx="13" cy="9" r="7" /><path d="M8 15l-6 9" />
            </svg>
          </SearchBox>
          <svg width="28" height="42" viewBox="0 0 28 42" fill="none" stroke="#666" strokeWidth="2" style={{ marginLeft: 7 }}>
            <path d="M1 3h26L17 20v18h-6V20z" />
          </svg>
          <FilterSep />
          <svg width="24" height="32" viewBox="0 0 24 32" stroke="#666" strokeWidth="2">
            <path d="M0 2h24M0 9h24M0 16h24M0 23h24M0 30h24" strokeDasharray="6 3" />
          </svg>
          <span style={{ marginLeft: 19 }}><Caret $s={7} /></span>
        </SearchRow>
        <TablesHeading>Tables</TablesHeading>
        {DIMENSIONS.map((f) => <Field key={f.name} f={f} />)}
        <FieldRule />
        {MEASURES.map((f) => <Field key={f.name} f={f} color="#4fae84" />)}
      </DataPane>

      <ShelvesColumn>
        <Card $h={122}>Pages</Card>
        <Card $h={154}>Filters</Card>
        <Card $h={505} $line="#b5b5b5">
          <MarksHead>Marks<span><Caret $c="#b5b5b5" $s={7} /></span></MarksHead>
          <MarkSelect>
            <svg width="20" height="20" viewBox="0 0 20 20" fill="none" stroke="#777" strokeWidth="2"><circle cx="10" cy="10" r="8.5" /></svg>
            Circle
            <div><Caret /></div>
          </MarkSelect>
          <MarkGrid>
            <MarkCard $active><DotsIcon />Color</MarkCard>
            <MarkCard><SizeIcon />Size</MarkCard>
            <MarkCard><TextIcon w={28} h={24} sw={2} c="#666" />Label</MarkCard>
            <MarkCard><DetailIcon />Detail</MarkCard>
            <MarkCard><TooltipIcon />Tooltip</MarkCard>
          </MarkGrid>
          <PillRow $mt={18}><DotsIcon /><FieldPill>Tree Id<Caret $c="#fff" $s={6} /></FieldPill></PillRow>
          <PillRow $mt={11}><SizeIcon /></PillRow>
          <PillRow $mt={1}><TextIcon w={28} h={24} sw={2} c="#666" /></PillRow>
        </Card>
      </ShelvesColumn>

      <MainColumn>
        <AxisShelf $h={55}>
          <div>
            <svg width="24" height="24" viewBox="0 0 24 24" stroke="#666" strokeWidth="4">
              <path d="M4 0v4M4 7v17M12 0v4M12 7v17M20 0v4M20 7v17" />
            </svg>
            Columns
          </div>
        </AxisShelf>
        <AxisShelf $h={56}>
          <div>
            <svg width="24" height="22" viewBox="0 0 24 22" stroke="#666" strokeWidth="4">
              <path d="M0 3h4M7 3h17M0 11h4M7 11h17M0 19h4M7 19h17" />
            </svg>
            Rows
          </div>
        </AxisShelf>
        <ViewRow>
          <ViewPane>
            <ViewTitle>Trees per Neighbourhood</ViewTitle>
            <ScatterPlot />
          </ViewPane>
          <LegendPane>
            {LEGEND.map(([n, c]) => <LegendItem key={n} $c={c}><i />{n}</LegendItem>)}
          </LegendPane>
        </ViewRow>
      </MainColumn>
    </Workspace>

    <SheetStrip />
    <TabBar>
      <SheetTab $w={259} $pl={17}>
        <svg width="18" height="22" viewBox="0 0 18 22" fill="none" stroke="#777" strokeWidth="2">
          <ellipse cx="9" cy="4" rx="7.5" ry="3" /><path d="M1.5 4v14c0 2 3 3 7.5 3s7.5-1 7.5-3V4" />
        </svg>
        Data Source
      </SheetTab>
      <SheetTab $w={316} $pl={12} $active>Trees per Neighbourhood</SheetTab>
      {['sheet', 'dash', 'story'].map((k) => (
        <SheetTab key={k} $w={64} $center>
          <svg width="30" height="32" viewBox="0 0 30 32" fill="none" stroke="#777" strokeWidth="2">
            {k === 'sheet' && <path d="M1 1h21v23H1zM7 19v-5M12 19V7M17 19v-8" />}
            {k === 'dash' && <path d="M1 1h21v23H1zM1 12h21M11 1v23" />}
            {k === 'story' && <path d="M1 3l10 3 10-5v23l-10 1-10-3zM11 6v19" />}
            <path d="M23 17v15M16 25h14" strokeWidth="3.5" stroke="#666" />
          </svg>
        </SheetTab>
      ))}
    </TabBar>
    <StatusBar>
      <StatusCell $w={195} $pl={23}>146650 marks</StatusCell>
      <StatusCell $w={197}>1 row by 1 column</StatusCell>
      <StatusCell $w={1584} $line>SUM of CNT(Tree Id): 146,648</StatusCell>
      <StatusCell $w={255} $line />
      <StatusCell $w={53} $line />
      <StatusCell $w={55} $line />
      <StatusCell $w={94} $line />
      <StatusCell $w={142} $line $pl={17}>
        <svg width="112" height="16" viewBox="0 0 112 16" fill="#bbb">
          <path d="M0 0h2v16H0zM14 0v16L4 8zM42 0v16L32 8zM66 0v16L76 8zM94 0v16l10-8zM106 0h2v16h-2z" />
        </svg>
      </StatusCell>
      <StatusCell $w={141} $pl={18} $gap={20}>
        <svg width="22" height="22" viewBox="0 0 22 22" fill="#bbb"><path d="M0 0h6v6H0zM8 0h6v6H8zM16 0h6v6h-6zM0 8h6v6H0zM8 8h6v6H8zM16 8h6v6h-6zM0 16h6v6H0zM8 16h6v6H8zM16 16h6v6h-6z" /></svg>
        <svg width="22" height="22" viewBox="0 0 22 22" fill="#bbb"><path d="M0 0h22v14H0zM0 16h6v6H0zM8 16h6v6H8zM16 16h6v6h-6z" /></svg>
        <svg width="22" height="22" viewBox="0 0 22 22" fill="#666"><path d="M0 0h22v22H0z" /></svg>
      </StatusCell>
    </StatusBar>
    <BottomEdge />

    <MenuLayer>
      <Menu $w={312}><MenuList items={MAIN_MENU} /></Menu>
      <Menu $w={270} $sub><MenuList items={SUB_MENU} sub /></Menu>
    </MenuLayer>

    <ShowMeTab>
      <svg width="32" height="30" viewBox="0 0 32 30">
        <path fill="#8a6f97" d="M0 0h25v6H0z" /><path fill="#84a3cb" d="M0 8h32v6H0z" />
        <path fill="#f5a97c" d="M0 16h13v6H0z" /><path fill="#f46f7e" d="M0 24h19v6H0z" />
      </svg>
      Show Me
    </ShowMeTab>
    <ShowMePanel>
      <ThumbGrid>
        {THUMBS.map((t, i) => (
          <Thumb key={i} $sel={i === 6}><svg viewBox="0 0 112 84">{t}</svg></Thumb>
        ))}
      </ThumbGrid>
      <HintBlock>
        <div>For <b>horizontal bars</b> try</div>
        <HintRow><HintLabel>0 or more</HintLabel><HintPill $w={178} $c="#4a95b5">Dimensions</HintPill></HintRow>
        <HintRow><HintLabel>1 or more</HintLabel><HintPill $w={154} $c="#52b284">Measures</HintPill></HintRow>
      </HintBlock>
    </ShowMePanel>

    <AnnotationBox />
    <ArrowLayer width="2716" height="1568" viewBox="0 0 2716 1568" fill="#d34875">
      <polygon points="342,860 349,869 466,775 480,783 502,727 445,743 457,761" />
      <polygon points="1115,1201 1168,1175 1168,1198 1348,1198 1348,1209 1168,1209 1168,1228" />
    </ArrowLayer>
  </Page>
);

export default App;
